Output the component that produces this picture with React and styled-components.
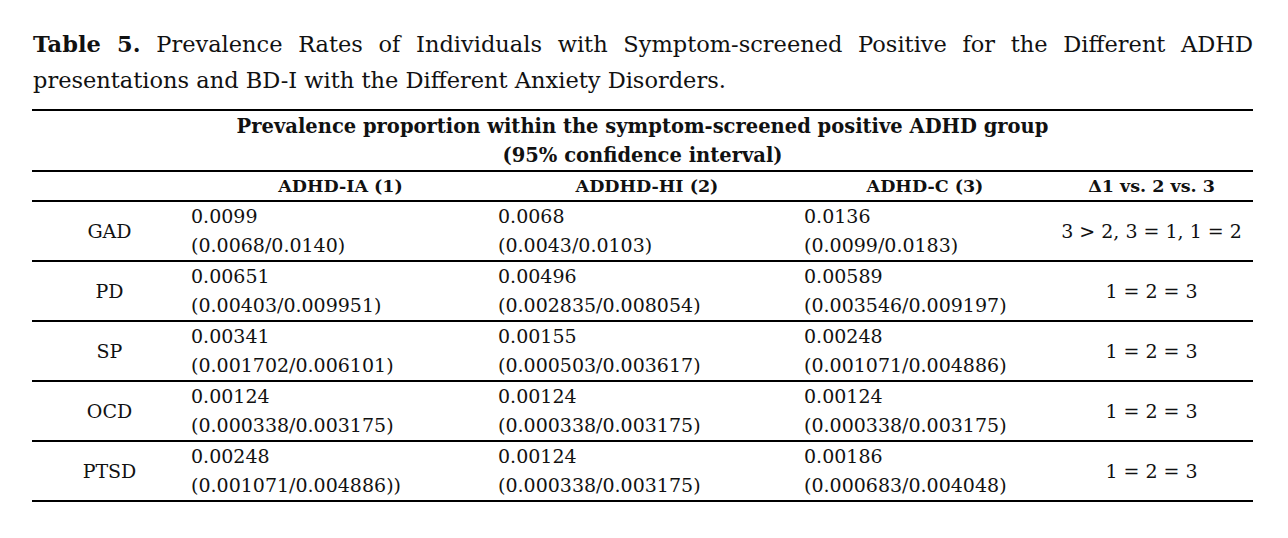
import React from 'react';
import styled, { createGlobalStyle } from 'styled-components';

const rows = [
  {
    name: 'GAD',
    cells: [
      ['0.0099', '(0.0068/0.0140)'],
      ['0.0068', '(0.0043/0.0103)'],
      ['0.0136', '(0.0099/0.0183)'],
    ],
    diff: '3 > 2, 3 = 1, 1 = 2',
  },
  {
    name: 'PD',
    cells: [
      ['0.00651', '(0.00403/0.009951)'],
      ['0.00496', '(0.002835/0.008054)'],
      ['0.00589', '(0.003546/0.009197)'],
    ],
    diff: '1 = 2 = 3',
  },
  {
    name: 'SP',
    cells: [
      ['0.00341', '(0.001702/0.006101)'],
      ['0.00155', '(0.000503/0.003617)'],
      ['0.00248', '(0.001071/0.004886)'],
    ],
    diff: '1 = 2 = 3',
  },
  {
    name: 'OCD',
    cells: [
      ['0.00124', '(0.000338/0.003175)'],
      ['0.00124', '(0.000338/0.003175)'],
      ['0.00124', '(0.000338/0.003175)'],
    ],
    diff: '1 = 2 = 3',
  },
  {
    name: 'PTSD',
    cells: [
      ['0.00248', '(0.001071/0.004886))'],
      ['0.00124', '(0.000338/0.003175)'],
      ['0.00186', '(0.000683/0.004048)'],
    ],
    diff: '1 = 2 = 3',
  },
];

function App() {
  return (
    <>
      <GlobalStyle />
      <Page>
        <Caption>
          <b>Table 5.</b> Prevalence Rates of Individuals with Symptom-screened
          Positive for the Different ADHD presentations and BD-I with the
          Different Anxiety Disorders.
        </Caption>
        <Table>
          <colgroup>
            <col style={{ width: 155 }} />
            <col style={{ width: 307 }} />
            <col style={{ width: 306 }} />
            <col style={{ width: 250 }} />
            <col style={{ width: 203 }} />
          </colgroup>
          <thead>
            <TopRow>
              <Title colSpan={5}>
                Prevalence proportion within the symptom-screened positive ADHD group
                <br />
                (95% confidence interval)
              </Title>
            </TopRow>
            <SubRow>
              <HeadCell />
              <HeadCell>ADHD-IA (1)</HeadCell>
              <HeadCell>ADDHD-HI (2)</HeadCell>
              <HeadCell>ADHD-C (3)</HeadCell>
              <HeadCell>Δ1 vs. 2 vs. 3</HeadCell>
            </SubRow>
          </thead>
          <tbody>
            {rows.map(row => (
              <BodyRow key={row.name}>
                <Cell center>{row.name}</Cell>
                {row.cells.map((c, i) => (
                  <Cell key={i}>
                    {c[0]}
                    <br />
                    {c[1]}
                  </Cell>
                ))}
                <Cell center>{row.diff}</Cell>
              </BodyRow>
            ))}
          </tbody>
        </Table>
      </Page>
    </>
  );
}

const GlobalStyle = createGlobalStyle`
  body {
    margin: 0;
    background: #fff;
    color: #111;
    font-family: "DejaVu Serif", "Liberation Serif", serif;
  }
`;

const Page = styled.div`
  padding: 26px 35px 0 32px;
  width: 1221px;
`;

const Caption = styled.p`
  margin: 0 0 11px 1px;
  font-size: 22.5px;
  line-height: 36px;
  text-align: justify;

  b {
    font-weight: 700;
  }
`;

const Table = styled.table`
  width: 1221px;
  table-layout: fixed;
  border-collapse: collapse;
  border-top: 2px solid #000;
  font-size: 19px;
`;

const TopRow = styled.tr`
  height: 58px;
  border-bottom: 2px solid #000;
`;

const SubRow = styled.tr`
  height: 28px;
  border-bottom: 2px solid #000;
`;

const HeadCell = styled.th`
  padding: 0;
  font-size: 17.5px;
  font-weight: 700;
  line-height: 28px;
  text-align: center;
  vertical-align: middle;
`;

const Title = styled(HeadCell)`
  padding-top: 1px;
  font-size: 19.5px;
  line-height: 29px;
`;

const BodyRow = styled.tr`
  height: 58px;
  border-bottom: 2px solid #000;
`;

const Cell = styled.td`
  padding: 0 0 0 ${props => (props.center ? 0 : 4)}px;
  line-height: 29px;
  text-align: ${props => (props.center ? 'center' : 'left')};
  vertical-align: middle;
  white-space: nowrap;
`;

export default App;
